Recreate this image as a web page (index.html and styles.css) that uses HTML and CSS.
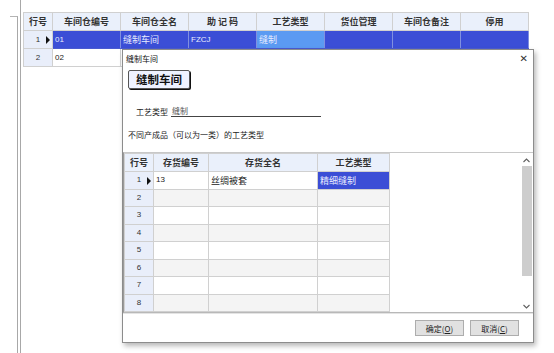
FILE: index.html
```html
<!DOCTYPE html>
<html lang="zh-CN">
<head>
  <meta charset="UTF-8" />
  <title>车间仓</title>
  <link rel="stylesheet" href="styles.css">
</head>
<body>
  <div class="screen">
    <div class="side"></div>
    <div class="main">
      <table class="grid outer">
        <colgroup>
          <col class="c-no"><col class="c68"><col class="c68"><col class="c68"><col class="c68"><col class="c68"><col class="c68"><col class="c68">
        </colgroup>
        <tr class="head">
          <th>行号</th><th>车间仓编号</th><th>车间仓全名</th><th>助 记 码</th><th>工艺类型</th><th>货位管理</th><th>车间仓备注</th><th>停用</th>
        </tr>
        <tr class="sel">
          <td class="rn">1 <span class="arrow"></span></td><td class="num">01</td><td>缝制车间</td><td class="num">FZCJ</td><td class="cur">缝制</td><td></td><td></td><td></td>
        </tr>
        <tr>
          <td class="rn">2</td><td class="num">02</td><td></td><td></td><td></td><td></td><td></td><td></td>
        </tr>
      </table>
    </div>
  </div>

  <div class="dialog">
    <div class="titlebar">
      <span>缝制车间</span>
      <span class="close">&#x2715;</span>
    </div>
    <div class="dlg-body">
      <div class="badge">缝制车间</div>
      <div class="field">
        <span class="field-label">工艺类型</span>
        <span class="field-value">缝制</span>
      </div>
      <p class="note">不同产成品（可以为一类）的工艺类型</p>
    </div>
    <div class="grid-area">
      <table class="grid inner">
        <colgroup>
          <col class="c-no"><col class="c55"><col class="c109"><col class="c72">
        </colgroup>
        <tr class="head"><th>行号</th><th>存货编号</th><th>存货全名</th><th>工艺类型</th></tr>
        <tr><td class="rn">1 <span class="arrow"></span></td><td class="num">13</td><td>丝绸被套</td><td class="cur2">精细缝制</td></tr>
        <tr class="alt"><td class="rn">2</td><td></td><td></td><td></td></tr>
        <tr><td class="rn">3</td><td></td><td></td><td></td></tr>
        <tr class="alt"><td class="rn">4</td><td></td><td></td><td></td></tr>
        <tr><td class="rn">5</td><td></td><td></td><td></td></tr>
        <tr class="alt"><td class="rn">6</td><td></td><td></td><td></td></tr>
        <tr><td class="rn">7</td><td></td><td></td><td></td></tr>
        <tr class="alt"><td class="rn">8</td><td></td><td></td><td></td></tr>
      </table>
      <div class="scrollbar">
        <svg class="sb-arrow" width="7" height="5" viewBox="0 0 7 5"><path d="M0.5 4 L3.5 1 L6.5 4" fill="none" stroke="#606060" stroke-width="1.1"/></svg>
        <div class="sb-thumb"></div>
        <div class="sb-rest"></div>
        <svg class="sb-arrow" width="7" height="5" viewBox="0 0 7 5"><path d="M0.5 1 L3.5 4 L6.5 1" fill="none" stroke="#606060" stroke-width="1.1"/></svg>
      </div>
    </div>
    <div class="footer">
      <button class="btn">确定(<u>O</u>)</button>
      <button class="btn">取消(<u>C</u>)</button>
    </div>
  </div>
</body>
</html>
```

FILE: styles.css
```css
* {
  box-sizing: border-box; margin: 0; padding: 0;
}

body {
  background: #fff;
  font-family: "Noto Sans CJK SC", "Liberation Sans", sans-serif;
  font-size: 9px;
  color: #222;
  width: 554px;
  height: 353px;
  overflow: hidden;
}

.screen {
  display: flex;
  height: 353px;
}

.side {
  width: 8px;
  margin-left: 10px;
  margin-top: 16px;
  border-top: 1px solid #b4b4b4;
  border-right: 1px solid #a8a8a8;
}

.main {
  margin-left: 2px;
  padding-left: 2px;
  padding-top: 12px;
  border-left: 1px solid #a8a8a8;
}

/* grids */
.grid {
  border-collapse: collapse;
  table-layout: fixed;
}

.grid th,
.grid td {
  border: 1px solid #d0d0d0;
  white-space: nowrap;
  overflow: hidden;
  padding: 0 2px;
  line-height: 1;
}

.grid th {
  background: #eaf0fb;
  font-weight: bold;
  font-size: 9px;
  color: #333;
}

.c-no { width: 29px; }
.c68 { width: 68px; }
.c55 { width: 55px; }
.c109 { width: 109px; }
.c72 { width: 72px; }

.outer {
  border-top: 1px solid #c8c8c8;
}

.outer tr { height: 18px; }

.grid .rn {
  background: #e9eefa;
  text-align: center;
  font-family: "Liberation Sans", sans-serif;
  font-size: 8px;
  color: #333;
  position: relative;
}

.arrow {
  position: absolute;
  right: 2px;
  top: 5px;
  width: 0;
  height: 0;
  border-top: 4px solid transparent;
  border-bottom: 4px solid transparent;
  border-left: 4px solid #111;
}

.grid .num {
  font-family: "Liberation Sans", sans-serif;
  font-size: 8px;
}

.sel td {
  background: #3b4ed6;
  color: #e8ecff;
  border-color: #4a5bd0 #8090e0;
}

.sel td.cur {
  background: #5b9af2;
}

.sel td.rn {
  background: #e9eefa;
  color: #333;
  border-color: #d0d0d0;
}

/* dialog */
.dialog {
  position: absolute;
  left: 122px;
  top: 49px;
  width: 412px;
  height: 294px;
  background: #fff;
  border: 1px solid #8c8c8c;
  box-shadow: 2px 3px 5px rgba(0, 0, 0, 0.28);
  display: flex;
  flex-direction: column;
}

.titlebar {
  height: 16px;
  display: flex;
  align-items: center;
  justify-content: space-between;
  padding: 0 5px 0 3px;
  font-size: 8px;
  color: #111;
}

.close {
  font-family: "DejaVu Sans", sans-serif;
  font-size: 10px;
  color: #333;
}

.dlg-body {
  padding: 4px 0 0 5px;
  height: 86px;
}

.badge {
  display: inline-block;
  width: 62px;
  height: 19px;
  line-height: 17px;
  text-align: center;
  font-size: 11.5px;
  font-weight: bold;
  color: #111;
  background: #eef2ff;
  border: 1px solid #555;
  border-radius: 2px;
  box-shadow: 1px 1px 0 #111;
}

.field {
  display: flex;
  align-items: flex-end;
  margin: 16px 0 0 8px;
  font-size: 8px;
}

.field-label {
  margin-right: 3px;
}

.field-value {
  width: 150px;
  border-bottom: 1px solid #444;
  padding-left: 1px;
  color: #555;
}

.note {
  margin-top: 12px;
  font-size: 8px;
  color: #222;
}

.grid-area {
  display: flex;
  height: 161px;
  border-top: 1px solid #c8c8c8;
  border-bottom: 1px solid #b8b8b8;
  border-left: 1px solid #9a9a9a;
}

.inner tr { height: 17.5px; }
.inner tr.head { height: 18px; }

.inner .alt td:not(.rn) {
  background: #f4f4f4;
}

.inner td.cur2 {
  background: #3b4ed6;
  color: #e8ecff;
}

.scrollbar {
  margin-left: auto;
  margin-right: 1px;
  width: 11px;
  display: flex;
  flex-direction: column;
  align-items: center;
  padding: 5px 0 3px;
}

.sb-arrow {
  display: block;
  flex: none;
}

.sb-thumb {
  width: 10px;
  height: 110px;
  margin-top: 3px;
  background: #cdcdcd;
}

.sb-rest {
  flex: 1;
}

.footer {
  flex: 1;
  display: flex;
  justify-content: flex-end;
  align-items: center;
  gap: 6px;
  padding-right: 14px;
  border-top: 1px solid #e4e4e4;
}

.btn {
  width: 49px;
  height: 16px;
  font-family: "Noto Sans CJK SC", sans-serif;
  font-size: 8px;
  color: #222;
  background: #e1e1e1;
  border: 1px solid #adadad;
}
```
